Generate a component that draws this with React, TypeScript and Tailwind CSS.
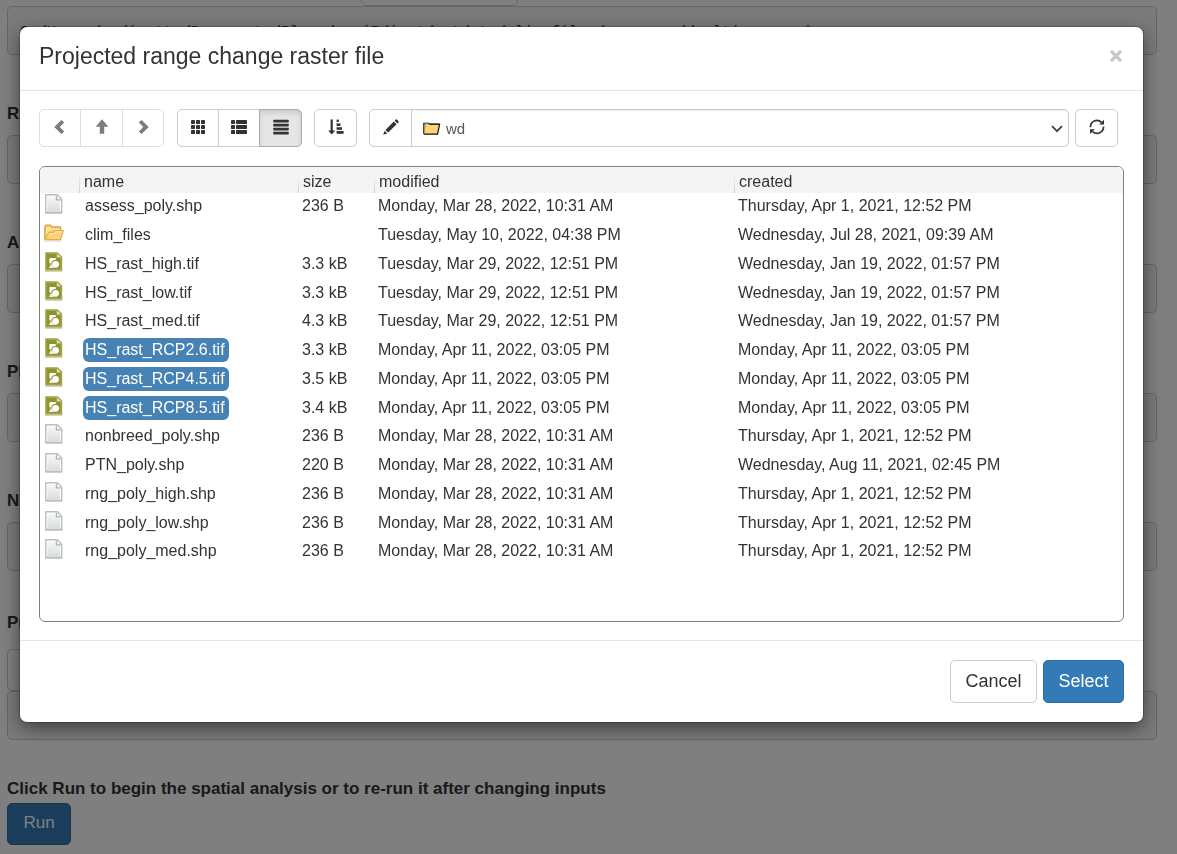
import React from "react";

type Kind = "page" | "folder" | "raster";

interface Entry {
  kind: Kind;
  name: string;
  size: string;
  modified: string;
  created: string;
  selected?: boolean;
}

const APR_1 = "Thursday, Apr 1, 2021, 12:52 PM";
const JAN_19 = "Wednesday, Jan 19, 2022, 01:57 PM";
const MAR_28 = "Monday, Mar 28, 2022, 10:31 AM";
const MAR_29 = "Tuesday, Mar 29, 2022, 12:51 PM";
const APR_11 = "Monday, Apr 11, 2022, 03:05 PM";

const entries: Entry[] = [
  { kind: "page", name: "assess_poly.shp", size: "236 B", modified: MAR_28, created: APR_1 },
  { kind: "folder", name: "clim_files", size: "", modified: "Tuesday, May 10, 2022, 04:38 PM", created: "Wednesday, Jul 28, 2021, 09:39 AM" },
  { kind: "raster", name: "HS_rast_high.tif", size: "3.3 kB", modified: MAR_29, created: JAN_19 },
  { kind: "raster", name: "HS_rast_low.tif", size: "3.3 kB", modified: MAR_29, created: JAN_19 },
  { kind: "raster", name: "HS_rast_med.tif", size: "4.3 kB", modified: MAR_29, created: JAN_19 },
  { kind: "raster", name: "HS_rast_RCP2.6.tif", size: "3.3 kB", modified: APR_11, created: APR_11, selected: true },
  { kind: "raster", name: "HS_rast_RCP4.5.tif", size: "3.5 kB", modified: APR_11, created: APR_11, selected: true },
  { kind: "raster", name: "HS_rast_RCP8.5.tif", size: "3.4 kB", modified: APR_11, created: APR_11, selected: true },
  { kind: "page", name: "nonbreed_poly.shp", size: "236 B", modified: MAR_28, created: APR_1 },
  { kind: "page", name: "PTN_poly.shp", size: "220 B", modified: MAR_28, created: "Wednesday, Aug 11, 2021, 02:45 PM" },
  { kind: "page", name: "rng_poly_high.shp", size: "236 B", modified: MAR_28, created: APR_1 },
  { kind: "page", name: "rng_poly_low.shp", size: "236 B", modified: MAR_28, created: APR_1 },
  { kind: "page", name: "rng_poly_med.shp", size: "236 B", modified: MAR_28, created: APR_1 },
];

function Glyph({ children }: { children: React.ReactNode }) {
  return (
    <svg viewBox="0 0 16 16" className="block size-4" fill="currentColor" aria-hidden="true">
      {children}
    </svg>
  );
}

const ChevronLeft = () => (
  <Glyph>
    <path d="M9.4 .9 12.2 3.4 7.7 7.9 12.2 12.4 9.4 14.9 2.3 7.9z" />
  </Glyph>
);
const ChevronRight = () => (
  <Glyph>
    <path d="M6.6 .9 3.8 3.4 8.3 7.9 3.8 12.4 6.6 14.9 13.7 7.9z" />
  </Glyph>
);
const ArrowUp = () => (
  <Glyph>
    <path d="M8 .2 14.4 7.8H10.2V14.8H5.8V7.8H1.6z" />
  </Glyph>
);
const GridIcon = () => (
  <Glyph>
    {[1, 6, 11].map((y) => [1, 6, 11].map((x) => <rect key={`${x}-${y}`} x={x} y={y} width="4" height="4" rx=".4" />))}
  </Glyph>
);
const ListIcon = () => (
  <Glyph>
    {[1, 6, 11].map((y) => (
      <React.Fragment key={y}>
        <rect x="0" y={y} width="4" height="4" rx=".4" />
        <rect x="5" y={y} width="11" height="4" rx=".4" />
      </React.Fragment>
    ))}
  </Glyph>
);
const JustifyIcon = () => (
  <Glyph>
    {[1, 5, 9, 13].map((y) => (
      <rect key={y} x=".3" y={y - 0.2} width="15.4" height="2.6" rx=".5" />
    ))}
  </Glyph>
);
const SortIcon = () => (
  <Glyph>
    <path d="M2.6 .4H4.8V11.4H7.2L3.7 15.4.2 11.4H2.6z" />
    <rect x="8.6" y=".6" width="2.2" height="2.4" />
    <rect x="8.6" y="4.4" width="3.8" height="2.6" />
    <rect x="8.6" y="8.2" width="5.4" height="2.6" />
    <rect x="8.6" y="12" width="7" height="2.8" />
  </Glyph>
);
const PencilIcon = () => (
  <Glyph>
    <path d="M12.7.6a.9.9 0 0 1 1.2 0l1.6 1.6a.9.9 0 0 1 0 1.2l-1.1 1.1L11.6 1.7zM10.8 2.5l2.8 2.8-8.4 8.3-2.8-2.7zM1.7 11.8l2.6 2.6L.2 15.8z" />
  </Glyph>
);
const RefreshIcon = () => (
  <Glyph>
    <path d="M1.5 8.2A6.4 6.4 0 0 1 12.4 3.3M14.5 7.6A6.4 6.4 0 0 1 3.6 12.5" fill="none" stroke="currentColor" strokeWidth="1.7" />
    <path d="M15 .8V5.6H10.2zM1 15V10.2H5.8z" />
  </Glyph>
);

function PageIcon() {
  return (
    <svg viewBox="0 0 18 20" className="block h-5 w-[18px]" aria-hidden="true">
      <defs>
        <linearGradient id="paper" x1="0" y1="0" x2="0" y2="1">
          <stop offset="0" stopColor="#f7f8f8" />
          <stop offset="1" stopColor="#dadddf" />
        </linearGradient>
      </defs>
      <path d="M.3 18.4h17v1.3H.3z" fill="#bdbdbd" />
      <path d="M.8.8H12.3L16.7 5V18.2H.8z" fill="#fff" stroke="#bcbfc0" strokeWidth="1.4" />
      <path d="M2.4 2.4H11.4L15.1 6V17H2.4z" fill="url(#paper)" />
      <path d="M11.4 1.6V5.8H15.9" fill="#f4f4f4" stroke="#b0b3b4" strokeWidth="1.3" />
    </svg>
  );
}

function RasterIcon() {
  return (
    <svg viewBox="0 0 18 20" className="block h-5 w-[18px]" aria-hidden="true">
      <path d="M.3 18.4h17v1.3H.3z" fill="#c0c19c" />
      <path d="M.2.2H12.6L17.2 4.6V18.6H.2z" fill="#a1a548" />
      <path d="M2 1.9H11V6.3H15.4V16.8H2z" fill="#8f932f" />
      <path d="M12 1.4 16 5.3H12z" fill="#dcdfb0" />
      <rect x="4.4" y="6" width="6.4" height="5.6" rx=".8" fill="#fff" />
      <circle cx="10.4" cy="12" r="4.1" fill="#8f932f" />
      <circle cx="10.6" cy="12.3" r="3.4" fill="#fff" />
      <path d="M6 11.8 9 16H4z" fill="#f3f3e2" />
    </svg>
  );
}

function FolderIcon() {
  return (
    <svg viewBox="0 0 20 18" className="block h-[18px] w-5" aria-hidden="true">
      <path d="M.8 15.5V2.3L1.8 1H6.6L8 2.8H16.6V6" fill="#f6c766" stroke="#dca04a" strokeWidth="1.2" />
      <path d="M2 14V3.2H6.4L7.6 4.6H15.4V6.4H5z" fill="#fbe3a4" />
      <path d="M1 15.6 4.4 8.8H9L10.6 6.6H19.3L16.6 15.6z" fill="#fbd277" stroke="#e3aa52" strokeWidth="1.1" />
      <path d="M5.4 10H9.6L11.2 7.8H17.8" fill="none" stroke="#fdedc0" strokeWidth="1" />
      <path d="M.6 16.4H16.8v1H.6z" fill="#d7cbb8" />
    </svg>
  );
}

const kindIcon: Record<Kind, React.ReactNode> = {
  page: <PageIcon />,
  raster: <RasterIcon />,
  folder: <FolderIcon />,
};

function ToolButton({ label, className = "", disabled, pressed, children }: {
  label: string;
  className?: string;
  disabled?: boolean;
  pressed?: boolean;
  children: React.ReactNode;
}) {
  const tone = pressed
    ? "z-10 border-[#adadad] bg-[#e6e6e6] text-[#333] shadow-[inset_0_3px_5px_rgba(0,0,0,0.125)]"
    : disabled
      ? "border-[#dedede] bg-white text-[#7c7c7c]"
      : "border-[#ccc] bg-white text-[#333]";
  return (
    <button
      type="button"
      aria-label={label}
      aria-pressed={pressed}
      disabled={disabled}
      className={`flex h-[38px] shrink-0 items-center justify-center border pb-0.5 ${tone} ${className}`}
    >
      {children}
    </button>
  );
}

const output = "block h-[49px] overflow-hidden rounded-[5px] border border-[#ccc] bg-[#f5f5f5] px-3 py-3.5 font-['Liberation_Mono',monospace] text-[15px] leading-6 text-[#333]";

function Section({ title }: { title: string }) {
  return (
    <section className="mt-[47px]">
      <h2 className="mb-[9px] text-[17px] leading-6 font-bold">{title}</h2>
      <pre className={output} />
    </section>
  );
}

function InputsPage() {
  return (
    <main className="-mt-9 pr-5 pl-[7px]">
      <button type="button" aria-label="Choose folder" className="ml-[354px] block h-[42px] w-[157px] rounded-[5px] border border-[#ccc] bg-white" />
      <pre className={output}>C:/Users/sadinetto/Documents/Plans/ccviR/inst/extdata/clim_files/processed/multi_scenario</pre>
      <Section title="Range polygon shapefile" />
      <Section title="Assessment area polygon shapefile" />
      <Section title="Physiological thermal niche file" />
      <Section title="Non-breeding range polygon shapefile" />
      <section className="mt-10">
        <h2 className="mb-3.5 text-[17px] leading-6 font-bold">Projected range change raster file</h2>
        <button type="button" aria-label="Choose raster files" className="block h-[42px] w-[157px] rounded-[5px] border border-[#ccc] bg-white" />
        <pre className={output} />
      </section>
      <h2 className="mt-[37px] mb-0.5 text-[17px] leading-6 font-bold">Click Run to begin the spatial analysis or to re-run it after changing inputs</h2>
      <button type="button" className="h-[42px] w-16 rounded-[5px] border border-[#2e6da4] bg-[#337ab7] pb-0.5 text-[17px] text-white">
        Run
      </button>
    </main>
  );
}

function FileTable() {
  const head =
    "border-l px-0 pt-1 pb-0 pl-1 text-left font-normal [border-image:linear-gradient(to_bottom,transparent_30%,#ccc)_1]";
  return (
    <table className="w-full table-fixed border-separate border-spacing-0 text-[16px] text-[#333]">
      <colgroup>
        <col className="w-[39px]" />
        <col className="w-[219px]" />
        <col className="w-[76px]" />
        <col className="w-[360px]" />
        <col />
      </colgroup>
      <thead>
        <tr className="h-[26px] bg-[#f4f4f4] leading-[22px]">
          <th aria-label="type" className="p-0" />
          <th scope="col" className={head}>name</th>
          <th scope="col" className={head}>size</th>
          <th scope="col" className={head}>modified</th>
          <th scope="col" className={head}>created</th>
        </tr>
      </thead>
      <tbody className="[&>tr]:h-[29px] [&>tr:nth-child(4n)]:h-7">
        {entries.map((e) => (
          <tr key={e.name} className="align-top leading-6 whitespace-nowrap">
            <td className={e.kind === "folder" ? "pt-0.5 pl-1" : "pt-px pl-[5px]"}>{kindIcon[e.kind]}</td>
            <td className="pt-px pl-1">
              <span className={`inline-block rounded-md pr-1 pl-0.5 ${e.selected ? "bg-[#4682b4] text-white" : ""}`}>{e.name}</span>
            </td>
            <td className="pt-px pl-1">{e.size}</td>
            <td className="pt-px pl-1">{e.modified}</td>
            <td className="pt-px pl-1">{e.created}</td>
          </tr>
        ))}
      </tbody>
    </table>
  );
}

function Toolbar() {
  return (
    <div className="flex items-center pr-1.5">
      <div className="flex">
        <ToolButton label="Back" disabled className="w-[42px] rounded-l-[5px]"><ChevronLeft /></ToolButton>
        <ToolButton label="Up" disabled className="-ml-px w-[43px]"><ArrowUp /></ToolButton>
        <ToolButton label="Forward" disabled className="-ml-px w-[42px] rounded-r-[5px]"><ChevronRight /></ToolButton>
      </div>
      <div className="ml-[13px] flex">
        <ToolButton label="Icon view" className="w-[42px] rounded-l-[5px]"><GridIcon /></ToolButton>
        <ToolButton label="List view" className="-ml-px w-[42px]"><ListIcon /></ToolButton>
        <ToolButton label="Detail view" pressed className="-ml-px w-[43px] rounded-r-[5px]"><JustifyIcon /></ToolButton>
      </div>
      <ToolButton label="Sort" className="ml-3 w-[43px] rounded-[5px]"><SortIcon /></ToolButton>
      <div className="relative ml-3 flex grow">
        <ToolButton label="Edit path" className="w-[43px] rounded-l-[5px]"><PencilIcon /></ToolButton>
        <select
          aria-label="Current folder"
          defaultValue="wd"
          className="-ml-px h-[38px] min-w-0 grow appearance-none rounded-r-[5px] border border-[#ccc] bg-white pt-0.5 pl-[34px] text-[15px] text-[#555] shadow-[inset_0_1px_1px_rgba(0,0,0,0.075)]"
        >
          <option value="wd">wd</option>
        </select>
        <svg viewBox="0 0 18 14" className="pointer-events-none absolute top-[13px] left-[54px] h-3.5 w-[18px]" aria-hidden="true">
          <path d="M.8 12.2V1.4H5.6L6.8 2.2H16.2" fill="#e9a63c" stroke="#111" strokeWidth="1.1" />
          <path d="M1.4.9H5.4V2.2H1.4z" fill="#2f8fd8" />
          <path d="M1.2 12.2 3 2.6H16.6L14.6 12.2z" fill="#ffd478" />
          <path d="M6.4 2.2H16.6L14.6 12.2H1" fill="none" stroke="#111" strokeWidth="1.2" />
          <path d="M1.5 2.8V11L3 2.8z" fill="#f0a93a" />
        </svg>
        <svg viewBox="0 0 12 8" className="pointer-events-none absolute top-4 right-1.5 h-2 w-3" aria-hidden="true">
          <path d="M1 1.2 6 6.2 11 1.2" fill="none" stroke="#444" strokeWidth="1.9" />
        </svg>
      </div>
      <ToolButton label="Refresh" className="ml-1.5 w-[43px] rounded-[5px]"><RefreshIcon /></ToolButton>
    </div>
  );
}

export default function App() {
  return (
    <div className="min-h-screen overflow-hidden bg-white font-['Liberation_Sans',Arial,sans-serif] text-[#333]">
      <InputsPage />
      <div className="fixed inset-0 bg-black/50 pt-[27px] pr-[34px] pl-5">
        <div role="dialog" aria-modal="true" aria-labelledby="dialog-title" className="rounded-[7px] bg-white shadow-[0_0_0_1px_rgba(0,0,0,0.2),0_6px_18px_rgba(0,0,0,0.5)]">
          <header className="flex items-center justify-between border-b border-[#e5e5e5] px-[19px] pt-4 pb-[21px]">
            <h1 id="dialog-title" className="text-[23px] leading-[26px]">Projected range change raster file</h1>
            <button type="button" aria-label="Close" className="h-6 w-4 text-[#c8c8c8]">
              <svg viewBox="0 0 16 16" className="block size-4" aria-hidden="true">
                <path d="M3 3 13 13M13 3 3 13" stroke="currentColor" strokeWidth="3.2" />
              </svg>
            </button>
          </header>
          <div className="px-[19px] pt-[18px] pb-[18px]">
            <Toolbar />
            <div className="mt-[19px] h-[456px] overflow-hidden rounded-md border border-[#808080]">
              <FileTable />
            </div>
          </div>
          <footer className="flex justify-end gap-1.5 border-t border-[#e5e5e5] p-[19px]">
            <button type="button" className="h-[43px] w-[87px] rounded-[5px] border border-[#ccc] bg-white text-[18px] text-[#333]">Cancel</button>
            <button type="button" className="h-[43px] w-[81px] rounded-[5px] border border-[#2e6da4] bg-[#337ab7] text-[18px] text-white">Select</button>
          </footer>
        </div>
      </div>
    </div>
  );
}
